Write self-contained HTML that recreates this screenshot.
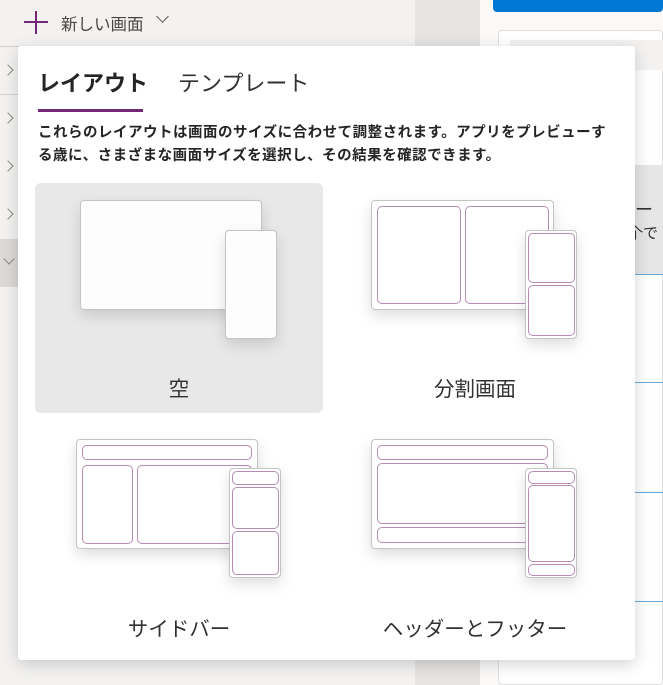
<!DOCTYPE html>
<html><head><meta charset="utf-8"><style>
*{margin:0;padding:0;box-sizing:border-box}
body{width:663px;height:685px;overflow:hidden;position:relative;background:#f3f2f1;font-family:"Liberation Sans","Noto Sans CJK JP",sans-serif;color:#323130}
.a{position:absolute}
.chev{position:absolute;left:4px;width:8px;height:8px;border-right:1px solid #8a8886;border-top:1px solid #8a8886;transform:rotate(45deg)}
.tab{background:#fdfdfe;border:1.5px solid #c4c4c4;border-radius:4px;box-shadow:0 6px 14px rgba(0,0,0,.13)}
.w{background:#fff}
.p{position:absolute;border:1.5px solid #b48cb4;border-radius:5px;background:#fff}
.lbl{position:absolute;font-size:20.5px;color:#323130;text-align:center;width:288px}
</style></head><body>
<div class="a" style="left:415px;top:0;width:65px;height:685px;background:#e6e4e2"></div>
<div class="a" style="left:480px;top:0;width:183px;height:685px;background:#faf9f8"></div>
<div class="a" style="left:493px;top:0;width:170px;height:12px;background:#0078d4;border-radius:0 0 4px 4px"></div>
<div class="a" style="left:498px;top:30px;width:165px;height:655px;background:#fff;border:1px solid #e1dfdd;border-radius:4px"></div>
<div class="a" style="left:510px;top:40px;width:153px;height:30px;background:#f3f2f1"></div>
<div class="a" style="left:635px;top:165px;width:28px;height:110px;background:#e6e6e6"></div>
<div class="a" style="left:635px;top:196px;font-size:18px;color:#323130">ー</div>
<div class="a" style="left:628px;top:222px;font-size:15px;color:#323130">个で</div>
<div class="a" style="left:635px;top:274px;width:28px;height:1px;background:#6aa6de"></div>
<div class="a" style="left:635px;top:382px;width:28px;height:1px;background:#6aa6de"></div>
<div class="a" style="left:635px;top:492px;width:28px;height:1px;background:#6aa6de"></div>
<div class="a" style="left:635px;top:601px;width:28px;height:1px;background:#6aa6de"></div>
<div class="a" style="left:35px;top:11px;width:2px;height:23px;background:#742774"></div>
<div class="a" style="left:24px;top:21px;width:24px;height:2px;background:#742774"></div>
<div class="a" style="left:61px;top:11px;font-size:16.5px;color:#484644">新しい画面</div>
<div class="a" style="left:158px;top:12px;width:9px;height:9px;border-right:1px solid #605e5c;border-bottom:1px solid #605e5c;transform:rotate(45deg)"></div>
<div class="a" style="left:0;top:46px;width:20px;height:1px;background:#d2d0ce"></div>
<div class="a" style="left:0;top:94px;width:20px;height:1px;background:#d2d0ce"></div>
<div class="a" style="left:0;top:239px;width:20px;height:48px;background:#dcdad8"></div>
<div class="chev" style="top:66px"></div>
<div class="chev" style="top:114px"></div>
<div class="chev" style="top:162px"></div>
<div class="chev" style="top:210px"></div>
<div class="a" style="left:5px;top:255px;width:8px;height:8px;border-right:1px solid #8a8886;border-bottom:1px solid #8a8886;transform:rotate(45deg)"></div>
<div class="a" style="left:18px;top:46px;width:617px;height:614px;background:#fff;border-radius:3px;box-shadow:0 4px 16px rgba(0,0,0,.18)"></div>
<div class="a" style="left:38px;top:66px;font-size:22px;font-weight:bold;color:#252423">レイアウト</div>
<div class="a" style="left:178px;top:66px;font-size:22px;color:#323130">テンプレート</div>
<div class="a" style="left:38px;top:109px;width:105px;height:3px;background:#742774"></div>
<div class="a" style="left:38px;top:122px;font-size:14.5px;font-weight:bold;line-height:23px;letter-spacing:0.5px;white-space:nowrap;color:#252423">これらのレイアウトは画面のサイズに合わせて調整されます。アプリをプレビューす<br>る歳に、さまざまな画面サイズを選択し、その結果を確認できます。</div>
<div class="a" style="left:35px;top:183px;width:288px;height:230px;background:#e8e8e8;border-radius:6px"></div>
<div class="a tab" style="left:80px;top:200px;width:182px;height:110px"></div>
<div class="a tab" style="left:225px;top:230px;width:52px;height:109px"></div>
<div class="lbl" style="left:35px;top:372px">空</div>
<div class="a tab w" style="left:371px;top:200px;width:183px;height:110px"></div>
<div class="p" style="left:377px;top:206px;width:84px;height:98px"></div>
<div class="p" style="left:465px;top:206px;width:84px;height:98px"></div>
<div class="a tab w" style="left:525px;top:230px;width:52px;height:109px"></div>
<div class="p" style="left:528px;top:233px;width:47px;height:50px"></div>
<div class="p" style="left:528px;top:285px;width:47px;height:51px"></div>
<div class="lbl" style="left:331px;top:372px">分割画面</div>
<div class="a tab w" style="left:76px;top:439px;width:182px;height:110px"></div>
<div class="p" style="left:82px;top:445px;width:170px;height:15px"></div>
<div class="p" style="left:82px;top:465px;width:51px;height:79px"></div>
<div class="p" style="left:137px;top:465px;width:115px;height:79px"></div>
<div class="a tab w" style="left:229px;top:468px;width:52px;height:110px"></div>
<div class="p" style="left:232px;top:471px;width:47px;height:14px"></div>
<div class="p" style="left:232px;top:487px;width:47px;height:42px"></div>
<div class="p" style="left:232px;top:531px;width:47px;height:44px"></div>
<div class="lbl" style="left:35px;top:612px">サイドバー</div>
<div class="a tab w" style="left:371px;top:439px;width:183px;height:110px"></div>
<div class="p" style="left:377px;top:445px;width:171px;height:15px"></div>
<div class="p" style="left:377px;top:463px;width:171px;height:61px"></div>
<div class="p" style="left:377px;top:527px;width:171px;height:16px"></div>
<div class="a tab w" style="left:525px;top:468px;width:52px;height:110px"></div>
<div class="p" style="left:528px;top:471px;width:47px;height:13px"></div>
<div class="p" style="left:528px;top:485px;width:47px;height:77px"></div>
<div class="p" style="left:528px;top:564px;width:47px;height:12px"></div>
<div class="lbl" style="left:331px;top:612px">ヘッダーとフッター</div>
</body></html>
